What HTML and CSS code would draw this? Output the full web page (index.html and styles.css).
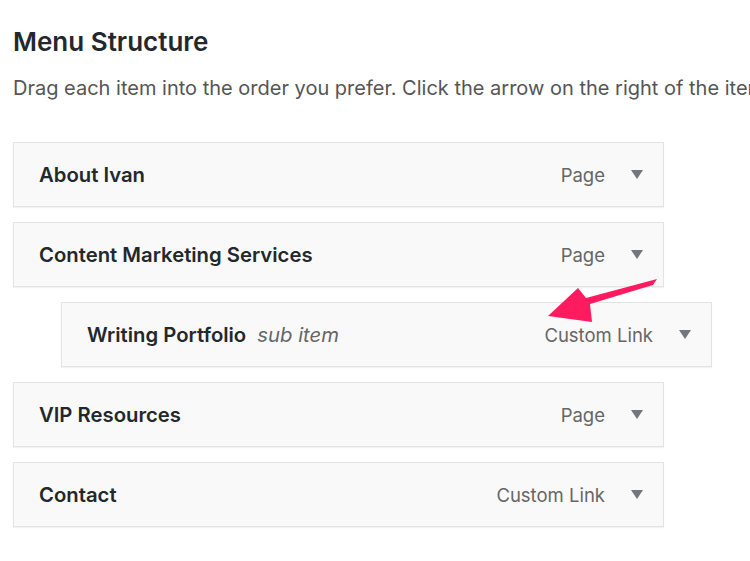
FILE: index.html
```html
<!DOCTYPE html>
<html lang="en">
<head>
  <meta charset="UTF-8">
  <title>Menus</title>
  <link rel="stylesheet" href="styles.css">
</head>
<body>

  <h2 class="titulo">Menu Structure</h2>
  <p class="dica">Drag each item into the order you prefer. Click the arrow on the right of the item to reveal additional configuration options.</p>

  <ul class="menu" id="menu">
    <li class="item">
      <span class="nome">About Ivan</span>
      <span class="tipo">Page</span>
      <span class="seta"></span>
    </li>
    <li class="item">
      <span class="nome">Content Marketing Services</span>
      <span class="tipo">Page</span>
      <span class="seta"></span>
    </li>
    <li class="item sub">
      <span class="nome">Writing Portfolio <em>sub item</em></span>
      <span class="tipo">Custom Link</span>
      <span class="seta"></span>
    </li>
    <li class="item">
      <span class="nome">VIP Resources</span>
      <span class="tipo">Page</span>
      <span class="seta"></span>
    </li>
    <li class="item">
      <span class="nome">Contact</span>
      <span class="tipo">Custom Link</span>
      <span class="seta"></span>
    </li>
  </ul>

  <!-- setinha rosa apontando pro sub item -->
  <svg class="flecha" width="750" height="561" viewBox="0 0 750 561">
    <polygon points="657,279 653,285 590,304 592,322 548,316 578,288 586,298" fill="#ff1b5f"/>
  </svg>

</body>
</html>
```

FILE: styles.css
```css
body {
  margin: 0;
  padding: 25px 0 0 13px;
  background-color: #fff;
  font-family: Inter, "Noto Sans", sans-serif;
  color: #23282d;
  overflow: hidden;
  width: 737px;
  height: 536px;
}
.titulo {
  margin: 0;
  font-size: 26px;
  font-weight: 600;
  line-height: 34px;
}
.dica {
  margin: 15px 0 0;
  font-size: 20px;
  color: #555;
  line-height: 28px;
  white-space: nowrap;
  overflow: hidden;
}
.menu {
  list-style: none;
  margin: 40px 0 0;
  padding: 0;
  display: flex;
  flex-direction: column;
  gap: 15px;
}
.item {
  width: 651px;
  height: 65px;
  box-sizing: border-box;
  display: flex;
  align-items: center;
  padding: 0 20px 0 25px;
  background-color: #f9f9f9;
  border: 1px solid #e3e3e3;
  box-shadow: 0 1px 1px rgba(0, 0, 0, 0.05);
}
.item.sub {
  margin-left: 48px;
}
.nome {
  flex: 1;
  font-size: 20.3px;
  font-weight: 600;
  color: #23282d;
}
.nome em {
  margin-left: 6px;
  font-weight: 400;
  color: #666;
}
.tipo {
  font-size: 18.5px;
  color: #666;
}
.seta {
  width: 0;
  height: 0;
  margin-left: 26px;
  border-left: 6px solid transparent;
  border-right: 6px solid transparent;
  border-top: 9px solid #72777c;
}
.flecha {
  position: absolute;
  left: 0;
  top: 0;
  pointer-events: none;
}
```
